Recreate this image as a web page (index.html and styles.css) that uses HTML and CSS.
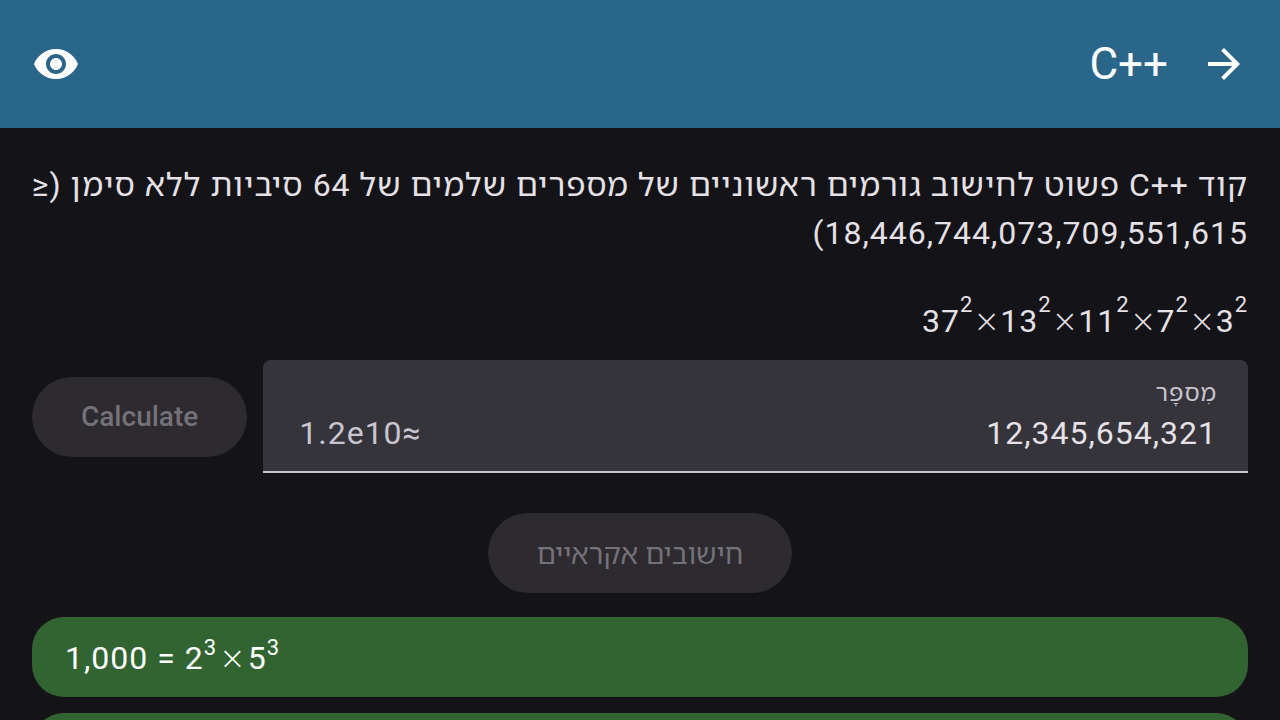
FILE: index.html
```html
<!DOCTYPE html>
<html lang="he" dir="rtl">
<head>
<meta charset="utf-8">
<meta name="viewport" content="width=device-width, initial-scale=1">
<title>C++</title>
<link rel="stylesheet" href="styles.css">
</head>
<body>
<header class="app-bar">
  <button class="icon-button" type="button" aria-label="חזרה">
    <svg class="icon" viewBox="0 0 24 24" aria-hidden="true"><path d="M12 4l-1.41 1.41L16.17 11H4v2h12.17l-5.58 5.59L12 20l8-8z"/></svg>
  </button>
  <h1 class="title" dir="ltr">C++</h1>
  <button class="icon-button" type="button" aria-label="הצגה">
    <svg class="icon" viewBox="0 0 24 24" aria-hidden="true"><path d="M12 4.500C7 4.500 2.730 7.610 1 12c1.730 4.390 6 7.500 11 7.500s9.270-3.110 11-7.500c-1.730-4.390-6-7.500-11-7.500zM12 17c-2.760 0-5-2.240-5-5s2.240-5 5-5 5 2.240 5 5-2.240 5-5 5zm0-8c-1.660 0-3 1.340-3 3s1.340 3 3 3 3-1.340 3-3-1.340-3-3-3z"/></svg>
  </button>
</header>
<main class="content">
  <p class="intro">קוד C++&lrm; פשוט לחישוב גורמים ראשוניים של מספרים שלמים של 64 סיביות ללא סימן (≤ 18,446,744,073,709,551,615)</p>
  <p class="factors">3<sup class="power">2</sup><span class="times">×</span>7<sup class="power">2</sup><span class="times">×</span>11<sup class="power">2</sup><span class="times">×</span>13<sup class="power">2</sup><span class="times">×</span>37<sup class="power">2</sup></p>
  <form class="entry">
    <div class="field">
      <label class="field-label" for="number">מִספָּר</label>
      <div class="field-row">
        <input class="field-input" id="number" type="text" inputmode="numeric" value="12,345,654,321">
        <span class="suffix">≈1.2e10</span>
      </div>
    </div>
    <button class="pill" type="submit" disabled>Calculate</button>
  </form>
  <button class="pill random" type="button" disabled>חישובים אקראיים</button>
  <ul class="results" dir="ltr">
    <li class="result">1,000 = 2<sup class="power">3</sup><span class="times">×</span>5<sup class="power">3</sup></li>
    <li class="result"></li>
  </ul>
</main>
</body>
</html>
```

FILE: styles.css
```css
* {
  box-sizing: border-box;
}

body {
  margin: 0;
  height: 100vh;
  overflow: hidden;
  background: #141318;
  color: #e5e1e6;
  font-family: Roboto, "Noto Sans Hebrew", "Open Sans", "Noto Sans", sans-serif;
  font-size: 32px;
  line-height: 48px;
  letter-spacing: 1px;
}

.app-bar {
  display: flex;
  align-items: center;
  gap: 32px;
  height: 128px;
  padding: 0 32px;
  background: #296689;
  color: #fff;
}

.icon-button {
  display: flex;
  padding: 0;
  border: 0;
  background: none;
  color: inherit;
}

.icon {
  width: 48px;
  height: 48px;
  fill: currentColor;
}

.title {
  flex: 1;
  margin: 0;
  font-size: 44px;
  font-weight: 400;
  line-height: 56px;
  letter-spacing: normal;
  text-align: right;
}

.content {
  display: flex;
  flex-direction: column;
  padding: 33px 32px 0;
}

.intro,
.factors {
  margin: 0;
}

.intro {
  margin-left: -16px;
}

.factors {
  padding: 40px 0 15px;
}

.power {
  position: relative;
  bottom: 20px;
  font-size: 22px;
  line-height: 0;
  vertical-align: baseline;
}

.times {
  font-family: "DejaVu Sans Light", "DejaVu Sans", sans-serif;
  font-weight: 200;
  line-height: 0;
  letter-spacing: normal;
}

.entry {
  display: flex;
  align-items: center;
  gap: 16px;
}

.field {
  flex: 1;
  min-width: 0;
  padding: 17px 31px 14px 36px;
  border-bottom: 2px solid #c9c5d0;
  border-radius: 8px 8px 0 0;
  background: #36343b;
}

.field-label {
  display: block;
  color: #c9c5d0;
  font-size: 24px;
  line-height: 32px;
}

.field-row {
  display: flex;
  align-items: center;
}

.field-input {
  flex: 1;
  min-width: 0;
  height: 48px;
  padding: 0;
  border: 0;
  outline: 0;
  background: none;
  color: inherit;
  font: inherit;
  letter-spacing: inherit;
}

.suffix {
  color: #c9c5d0;
}

.pill {
  height: 80px;
  padding: 0 49px;
  border: 0;
  border-radius: 40px;
  background: #2d2a30;
  color: #747178;
  font: inherit;
  font-size: 28px;
  font-weight: 500;
  line-height: 40px;
  letter-spacing: normal;
}

.random {
  align-self: center;
  margin: 40px 0 24px;
  padding-top: 4px;
  font-weight: 400;
}

.results {
  display: flex;
  flex-direction: column;
  gap: 16px;
  margin: 0;
  padding: 0;
  list-style: none;
}

.result {
  min-height: 80px;
  padding: 17px 33px 15px;
  border-radius: 32px;
  background: #316430;
  color: #fff;
}

.result .power {
  bottom: 14px;
}

.result .times {
  padding: 0 2px;
}
```
